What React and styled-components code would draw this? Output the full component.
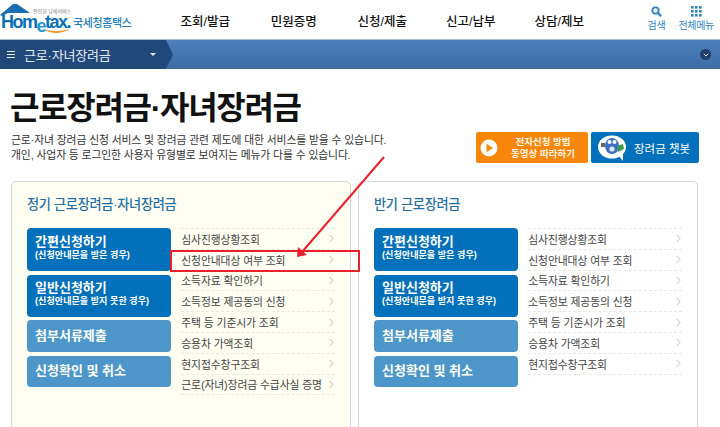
import styled, { createGlobalStyle } from "styled-components";
import { ChevronRight, ChevronDown } from "lucide-react";

const GlobalStyle = createGlobalStyle`
  html, body {
    margin: 0;
    padding: 0;
    background: #fff;
  }
  body {
    font-family: "Liberation Sans", "Noto Sans CJK KR", sans-serif;
  }
  * { box-sizing: border-box; }
`;

const Page = styled.div`
  position: relative;
  width: 720px;
  height: 427px;
  overflow: hidden;
`;

const Header = styled.header`
  display: flex;
  align-items: center;
  height: 39px;
`;

const Logo = styled.div`
  position: relative;
  width: 161px;
  height: 39px;
  flex: none;
`;

const LogoWord = styled.span`
  position: absolute;
  left: 1px;
  top: 15px;
  font-size: 18px;
  line-height: 14px;
  font-weight: 700;
  letter-spacing: -1.5px;
  color: #0a6fb8;
  em {
    font-style: normal;
    color: #1f97d4;
    position: relative;
    top: 4px;
  }
`;

const LogoKorean = styled.span`
  position: absolute;
  left: 73px;
  top: 15px;
  font-size: 11px;
  line-height: 16px;
  font-weight: 500;
  letter-spacing: -0.4px;
  color: #1c7fc2;
`;

const LogoTagline = styled.span`
  position: absolute;
  left: 33px;
  top: 8px;
  font-size: 5px;
  line-height: 6px;
  color: #777;
`;

const Nav = styled.nav`
  display: flex;
  flex: 1;
`;

const NavItem = styled.a`
  width: 88.5px;
  text-align: center;
  font-size: 12.5px;
  line-height: 20px;
  font-weight: 500;
  color: #111;
  position: relative;
  top: 2px;
`;

const Tools = styled.div`
  display: flex;
  gap: 13px;
  margin: 0 0 2px auto;
  padding-right: 6px;
`;

const Tool = styled.a`
  display: flex;
  flex-direction: column;
  align-items: center;
  gap: 2px;
  font-size: 10px;
  line-height: 13px;
  letter-spacing: -0.3px;
  color: #2b83c0;
  svg { display: block; }
`;

const SubBar = styled.div`
  display: flex;
  align-items: stretch;
  justify-content: space-between;
  height: 30px;
  border-top: 1px solid #a9bdd3;
  background: linear-gradient(#4c7fba, #3d6ca5);
`;

const Crumb = styled.div`
  display: flex;
  align-items: center;
  width: 173px;
  padding: 0 0 1px 7px;
  background: #20487a;
  color: #e6edf5;
  font-size: 13px;
  letter-spacing: -0.2px;
  clip-path: polygon(0 0, 166px 0, 173px 50%, 166px 100%, 0 100%);
`;

const Burger = styled.span`
  width: 8px;
  height: 7px;
  margin-right: 9px;
  border-top: 1px solid #e6edf5;
  border-bottom: 1px solid #e6edf5;
  background: linear-gradient(#e6edf5, #e6edf5) center / 100% 1px no-repeat;
`;

const Caret = styled.span`
  margin-left: auto;
  margin-right: 17px;
  width: 0;
  height: 0;
  border-left: 3px solid transparent;
  border-right: 3px solid transparent;
  border-top: 3px solid #e6edf5;
`;

const RoundButton = styled.span`
  display: flex;
  align-items: center;
  justify-content: center;
  align-self: center;
  width: 11px;
  height: 11px;
  margin-right: 9px;
  border-radius: 50%;
  background: #22406b;
  color: #dfe7f1;
`;

const Main = styled.main`
  padding: 0 21px 0 11px;
`;

const Title = styled.h1`
  margin: 19px 0 0 -1px;
  font-size: 32px;
  line-height: 40px;
  font-weight: 700;
  letter-spacing: -1.3px;
  color: #111;
`;

const IntroRow = styled.div`
  display: flex;
  justify-content: space-between;
  height: 43px;
  margin-top: 5px;
`;

const Intro = styled.p`
  margin: 0;
  font-size: 10.8px;
  line-height: 15px;
  letter-spacing: -0.1px;
  color: #333;
`;

const CtaGroup = styled.div`
  display: flex;
  gap: 3px;
  margin-top: -1px;
`;

const Cta = styled.a`
  display: flex;
  align-items: center;
  width: ${(p) => p.$width}px;
  height: 31px;
  border-radius: 2px;
  background: ${(p) => p.$color};
  color: #fff;
`;

const CtaTwoLine = styled.span`
  flex: 1;
  text-align: center;
  font-size: 9.5px;
  line-height: 12px;
  font-weight: 700;
  color: #fff6e6;
`;

const CtaLabel = styled.span`
  margin-left: 7px;
  font-size: 11.5px;
`;

const Cards = styled.div`
  display: flex;
  gap: 7px;
  margin-top: 5px;
`;

const Card = styled.section`
  width: 340px;
  height: 270px;
  padding: 13px 15px 0;
  border: 1px solid #d5d5d5;
  border-radius: 5px;
  background: ${(p) => p.$bg};
`;

const CardTitle = styled.h2`
  margin: 0;
  font-size: 13.2px;
  line-height: 20px;
  font-weight: 500;
  letter-spacing: -0.3px;
  color: #1f6fa8;
`;

const Columns = styled.div`
  display: flex;
  gap: 10px;
  margin-top: 13px;
`;

const Tiles = styled.div`
  display: flex;
  flex-direction: column;
  gap: 3.5px;
  width: 144.5px;
`;

const Tile = styled.a`
  display: flex;
  flex-direction: column;
  justify-content: center;
  height: ${(p) => p.$height}px;
  padding: 0 7px ${(p) => (p.$noted ? 6 : 0)}px 8px;
  border-radius: 4px;
  background: ${(p) => p.$color};
  color: #fff;
  font-size: 13px;
  line-height: 20px;
  font-weight: 700;
  small {
    margin-top: -2px;
    font-size: 9.1px;
    line-height: 11px;
    font-weight: 700;
  }
`;

const LinkList = styled.ul`
  width: 154px;
  margin: 0;
  padding: 0;
  list-style: none;
  border-top: 1px dashed #e8e8e0;
`;

const LinkRow = styled.li`
  display: flex;
  align-items: center;
  justify-content: space-between;
  height: 20.8px;
  border-bottom: 1px dashed #e8e8e0;
  font-size: 10.8px;
  letter-spacing: -0.1px;
  color: #444;
  white-space: nowrap;
  svg { flex: none; color: #a0a0a0; margin-right: -3px; }
`;

const Highlight = styled.div`
  position: absolute;
  left: 170px;
  top: 250px;
  width: 190px;
  height: 22px;
  border: 2px solid #e8212b;
`;

const ArrowOverlay = styled.svg`
  position: absolute;
  left: 290px;
  top: 150px;
`;

const navItems = ["조회/발급", "민원증명", "신청/제출", "신고/납부", "상담/제보"];

const tiles = [
  { label: "간편신청하기", note: "(신청안내문을 받은 경우)", height: 43, color: "#0270bb" },
  { label: "일반신청하기", note: "(신청안내문을 받지 못한 경우)", height: 42, color: "#0270bb" },
  { label: "첨부서류제출", height: 32, color: "#4c96c9" },
  { label: "신청확인 및 취소", height: 31, color: "#4c96c9" },
];

const links = [
  "심사진행상황조회",
  "신청안내대상 여부 조회",
  "소득자료 확인하기",
  "소득정보 제공동의 신청",
  "주택 등 기준시가 조회",
  "승용차 가액조회",
  "현지접수창구조회",
];

const HouseMark = () => (
  <svg width="32" height="14" viewBox="0 0 32 14" style={{ position: "absolute", left: 0, top: 3 }}>
    <path d="M0 12 L13 1 L17 1 L30 10 L8 10 L2 13 Z" fill="#1a6fb3" />
  </svg>
);

const Swoosh = () => (
  <svg width="30" height="8" viewBox="0 0 30 8" style={{ position: "absolute", left: 42, top: 28 }}>
    <path d="M1 1 Q14 9 28 1 Q14 5 1 1 Z" fill="#f29a2e" />
  </svg>
);

const SearchIcon = () => (
  <svg width="11" height="11" viewBox="0 0 11 11">
    <circle cx="4.5" cy="4.5" r="3.2" fill="none" stroke="#2b83c0" strokeWidth="1.8" />
    <path d="M7 7 L10.2 10.2" stroke="#2b83c0" strokeWidth="2.2" />
  </svg>
);

const GridIcon = () => (
  <svg width="11" height="11" viewBox="0 0 11 11" fill="#2b83c0">
    {[0, 4, 8].map((y) =>
      [0, 4, 8].map((x) => <rect key={`${x}-${y}`} x={x} y={y} width="2.6" height="2.6" />)
    )}
  </svg>
);

const PlayIcon = () => (
  <svg width="18" height="18" viewBox="0 0 18 18" style={{ marginLeft: 4, flex: "none" }}>
    <circle cx="9" cy="9" r="8.5" fill="#fff" />
    <path d="M6.5 4.8 L13.2 9 L6.5 13.2 Z" fill="#f58a0a" />
  </svg>
);

const BotIcon = () => (
  <svg width="30" height="26" viewBox="0 0 30 26" style={{ marginLeft: 6, flex: "none" }}>
    <ellipse cx="15" cy="12" rx="14" ry="11.5" fill="#fff" />
    <path d="M21 20 L26 26 L26 17 Z" fill="#fff" />
    <ellipse cx="15" cy="11" rx="7" ry="8" fill="#3a6fc4" />
    <circle cx="12.5" cy="7" r="2" fill="#fff" />
    <circle cx="17.5" cy="7" r="2" fill="#fff" />
    <circle cx="15" cy="14" r="2.6" fill="#dfe8f4" />
    <rect x="4" y="8" width="4" height="4" fill="#6b6b55" />
    <path d="M20 11 L26 9 L27 14 L21 17 Z" fill="#3f9a55" />
  </svg>
);

const PanelCard = ({ title, bg, rows }) => (
  <Card $bg={bg}>
    <CardTitle>{title}</CardTitle>
    <Columns>
      <Tiles>
        {tiles.map((t) => (
          <Tile key={t.label} $height={t.height} $color={t.color} $noted={!!t.note}>
            {t.label}
            {t.note && <small>{t.note}</small>}
          </Tile>
        ))}
      </Tiles>
      <LinkList>
        {rows.map((r) => (
          <LinkRow key={r}>
            {r}
            <ChevronRight size={13} strokeWidth={1.3} />
          </LinkRow>
        ))}
      </LinkList>
    </Columns>
  </Card>
);

const App = () => (
  <Page>
    <GlobalStyle />
    <Header>
      <Logo>
        <HouseMark />
        <LogoTagline>안전한 납세서비스</LogoTagline>
        <LogoWord>
          Hom<em>e</em>tax.
        </LogoWord>
        <Swoosh />
        <LogoKorean>국세청홈택스</LogoKorean>
      </Logo>
      <Nav>
        {navItems.map((n) => (
          <NavItem key={n}>{n}</NavItem>
        ))}
      </Nav>
      <Tools>
        <Tool>
          <SearchIcon />
          검색
        </Tool>
        <Tool>
          <GridIcon />
          전체메뉴
        </Tool>
      </Tools>
    </Header>
    <SubBar>
      <Crumb>
        <Burger />
        근로·자녀장려금
        <Caret />
      </Crumb>
      <RoundButton>
        <ChevronDown size={8} strokeWidth={3} />
      </RoundButton>
    </SubBar>
    <Main>
      <Title>근로장려금·자녀장려금</Title>
      <IntroRow>
        <Intro>
          근로·자녀 장려금 신청 서비스 및 장려금 관련 제도에 대한 서비스를 받을 수 있습니다.
          <br />
          개인, 사업자 등 로그인한 사용자 유형별로 보여지는 메뉴가 다를 수 있습니다.
        </Intro>
        <CtaGroup>
          <Cta $width={112} $color="#f7860b">
            <PlayIcon />
            <CtaTwoLine>
              전자신청 방법
              <br />
              동영상 따라하기
            </CtaTwoLine>
          </Cta>
          <Cta $width={108} $color="#0270bb">
            <BotIcon />
            <CtaLabel>장려금 챗봇</CtaLabel>
          </Cta>
        </CtaGroup>
      </IntroRow>
      <Cards>
        <PanelCard
          title="정기 근로장려금·자녀장려금"
          bg="#fffef3"
          rows={[...links, "근로(자녀)장려금 수급사실 증명"]}
        />
        <PanelCard title="반기 근로장려금" bg="#fff" rows={links} />
      </Cards>
    </Main>
    <Highlight />
    <ArrowOverlay width="100" height="112" viewBox="0 0 100 112">
      <path d="M94 7 L12 102" stroke="#e8212b" strokeWidth="2" fill="none" />
      <path d="M7 107 L8 97 L17 105 Z" fill="#e8212b" />
    </ArrowOverlay>
  </Page>
);

export default App;
